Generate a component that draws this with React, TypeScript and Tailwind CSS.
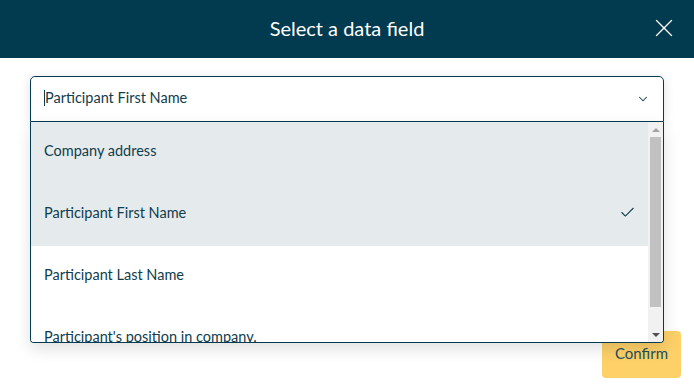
import React from "react";
import { X, ChevronDown, Check } from "lucide-react";

const fields = [
  { label: "Company address", hover: true },
  { label: "Participant First Name", selected: true },
  { label: "Participant Last Name" },
  { label: "Participant's position in company." },
];

export default function App() {
  return (
    <div
      className="w-[694px] h-[390px] bg-white overflow-hidden text-[#0f3d4c]"
      style={{ fontFamily: "Lato, 'Open Sans', sans-serif" }}>
      {/* Header */}
      <div className="h-[58px] bg-[#023a4f] relative flex items-center justify-center">
        <h2 className="text-white text-[20px] leading-none pb-[2px]">Select a data field</h2>
        <button className="absolute right-[15px] top-[13px] text-white">
          <X className="w-[30px] h-[30px]" strokeWidth={1.1} />
        </button>
      </div>

      {/* Body */}
      <div className="px-[30px] pt-[18px]">
        <div className="relative">
          <div className="h-[46px] border border-[#023a4f] rounded-t-[5px] flex items-center justify-between pl-[13px] pr-[13px] pb-[3px] shadow-[0_2px_12px_rgba(0,0,0,0.12)]">
            <span className="text-[14.5px] border-l border-[#0f3d4c] leading-[16px]">
              Participant First Name
            </span>
            <ChevronDown className="w-[14px] h-[14px] text-[#0f3d4c] mt-[3px]" strokeWidth={1.75} />
          </div>

          {/* Dropdown list */}
          <div className="absolute z-10 left-0 right-0 top-full h-[221px] border-x border-b border-[#023a4f] rounded-b-[4px] bg-white flex overflow-hidden shadow-[0_6px_16px_rgba(0,0,0,0.12)]">
            <ul className="flex-1 overflow-hidden">
              {fields.map((f) => (
                <li
                  key={f.label}
                  className={`h-[62px] shrink-0 flex items-center justify-between pl-[13px] pr-[12px] pb-[5px] text-[14.5px] ${
                    f.hover || f.selected ? "bg-[#e5eaed]" : "bg-white"
                  }`}>
                  <span>{f.label}</span>
                  {f.selected && (
                    <Check className="w-[17px] h-[17px] text-[#0f3d4c]" strokeWidth={1.5} />
                  )}
                </li>
              ))}
            </ul>
            {/* Scrollbar */}
            <div className="w-[15px] bg-[#f1f1f1] flex flex-col items-center">
              <div className="h-[15px] flex items-center justify-center">
                <div className="w-0 h-0 border-x-[4px] border-x-transparent border-b-[4px] border-b-[#a3a3a3]" />
              </div>
              <div className="w-[11px] h-[170px] bg-[#c1c1c1]" />
              <div className="flex-1" />
              <div className="h-[15px] flex items-center justify-center">
                <div className="w-0 h-0 border-x-[4px] border-x-transparent border-t-[4px] border-t-[#505050]" />
              </div>
            </div>
          </div>
        </div>
      </div>

      {/* Footer */}
      <div className="flex justify-end pr-[13px] pt-[209px]">
        <button className="w-[79px] h-[47px] bg-[#fdd068] rounded-[4px] text-[15px] text-[#1f4e5f] pb-[2px]">
          Confirm
        </button>
      </div>
    </div>
  );
}
